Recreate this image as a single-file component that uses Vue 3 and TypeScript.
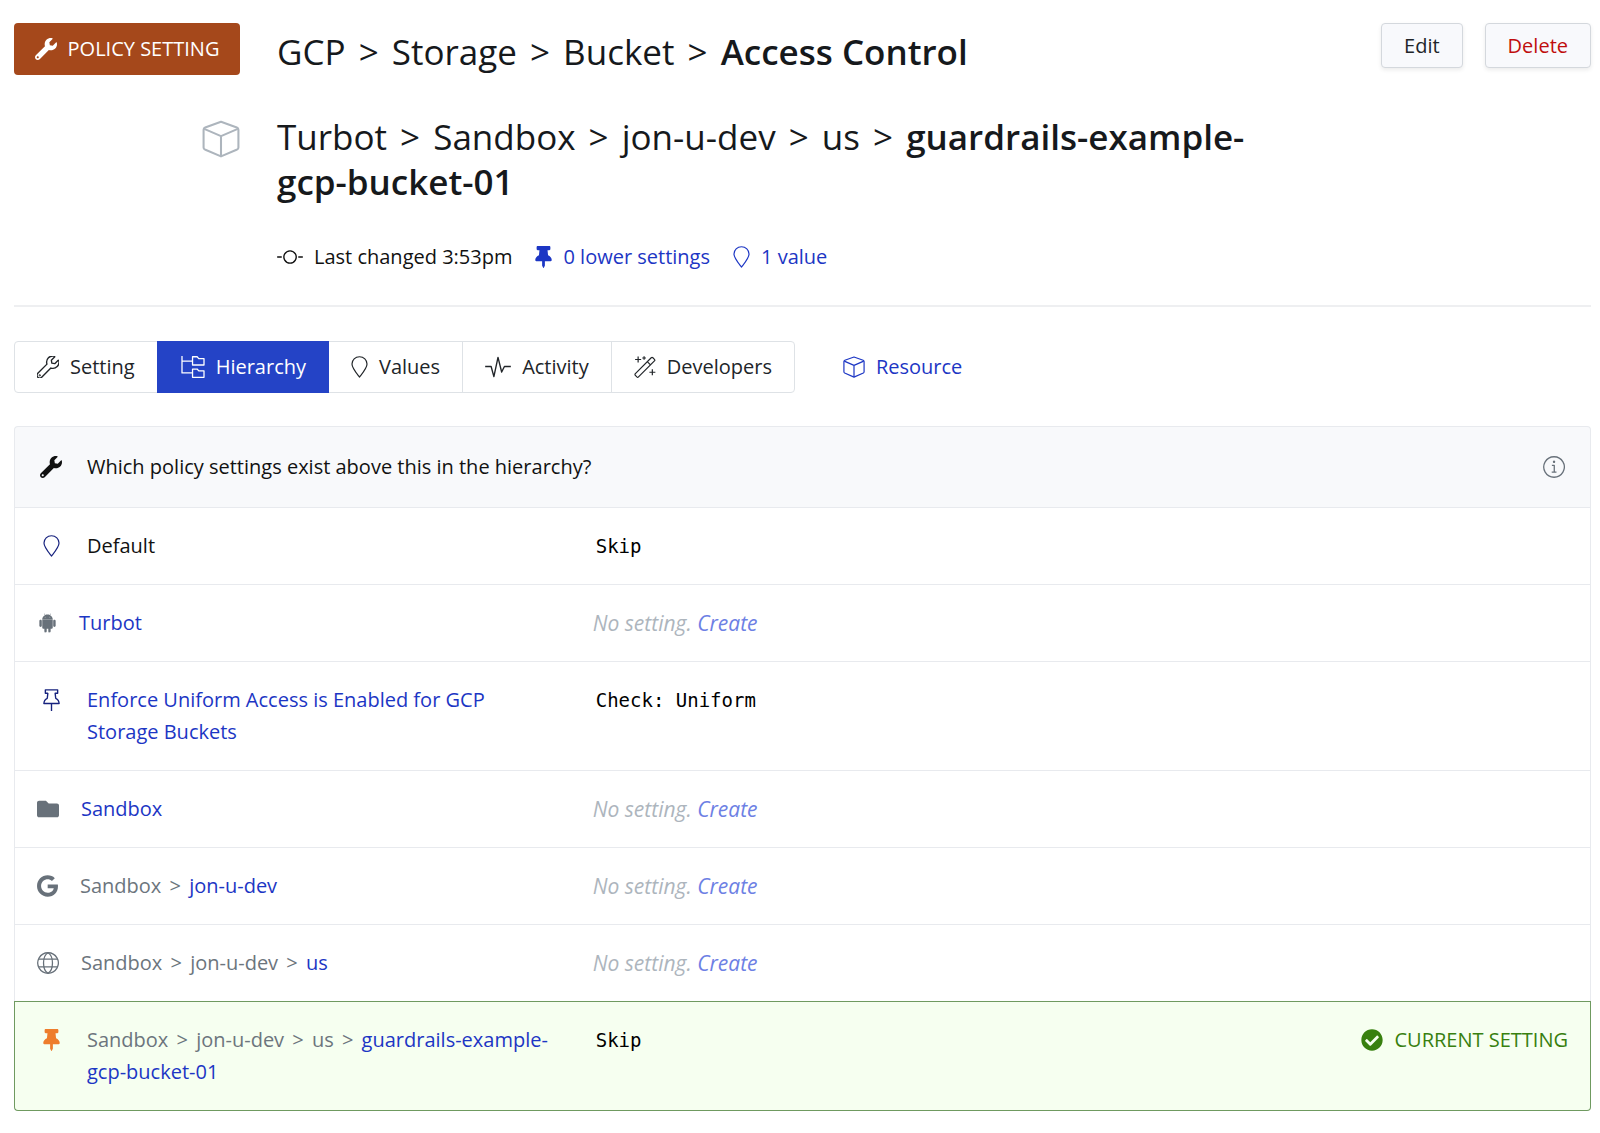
<script setup lang="ts">
import { h } from 'vue'

interface IconDef {
  box: [number, number]
  solid?: boolean
  stroke?: number
  paths: string[]
}

const wrench =
  'M507.73 109.1c-2.24-9.03-13.54-12.09-20.12-5.51l-74.36 74.36-67.88-11.31-11.31-67.88 74.36-74.36c6.62-6.62 3.43-17.9-5.66-20.16-47.38-11.74-99.55.91-136.58 37.93-39.64 39.64-50.55 97.1-34.05 147.2L18.74 402.76c-24.99 24.99-24.99 65.51 0 90.5 24.99 24.99 65.51 24.99 90.5 0l213.21-213.21c50.12 16.71 107.47 5.68 147.37-34.22 37.07-37.07 49.7-89.32 37.91-136.73z'
const wrenchHole =
  'M64 472c-13.25 0-24-10.75-24-24 0-13.26 10.75-24 24-24s24 10.74 24 24c0 13.25-10.75 24-24 24z'

const icons: Record<string, IconDef> = {
  wrench: { box: [512, 512], solid: true, paths: [wrench + wrenchHole] },
  wrenchLine: { box: [512, 512], stroke: 32, paths: [wrench, 'M64 438a10 10 0 1 0 .1 0z'] },
  cube: {
    box: [24, 24],
    stroke: 1.3,
    paths: ['M12 1.1 22 4.7q1 .4 1 1.4v11.2q0 .9-.8 1.3L12 23 1.8 18.6Q1 18.2 1 17.3V6.1q0-1 1-1.4z', 'M1.4 5.6 12 10.2l10.6-4.6M12 10.2V23']
  },
  commit: { box: [28, 24], stroke: 1.5, paths: ['M14 5.3a6.7 6.7 0 1 0 .1 0z', 'M0 12h5M23 12h5'] },
  pin: {
    box: [384, 512],
    solid: true,
    paths: [
      'M298.028 214.267L285.793 96H328c13.255 0 24-10.745 24-24V24c0-13.255-10.745-24-24-24H56C42.745 0 32 10.745 32 24v48c0 13.255 10.745 24 24 24h42.207L85.972 214.267C37.465 236.82 0 277.261 0 328c0 13.255 10.745 24 24 24h136v104.007c0 1.242.289 2.467.845 3.578l24 48c2.941 5.882 11.364 5.893 14.311 0l24-48a8.008 8.008 0 0 0 .845-3.578V352h136c13.255 0 24-10.745 24-24-.001-51.183-37.983-91.42-85.973-113.733z'
    ]
  },
  pinLine: {
    box: [18, 24],
    stroke: 1.5,
    paths: ['M2.3.9h13.4v3.8H13l.6 5.4c2.2 1 3.6 3 3.7 5.7H.7c.1-2.7 1.5-4.7 3.7-5.7L5 4.7H2.3z', 'M9 15.8V24']
  },
  balloon: {
    box: [18, 24],
    stroke: 1.3,
    paths: ['M9 .8C4.4.8.8 4.3.8 8.8c0 4.2 3 7.6 8.2 14.2 5.2-6.6 8.2-10 8.2-14.2C17.2 4.3 13.6.8 9 .8z']
  },
  tree: {
    box: [26, 24],
    stroke: 1.4,
    paths: ['M1 0v18.5h11.5M1 5.5h11.5', 'M12.5 .8h5l1.8 2H25v7H12.5z', 'M12.5 14.2h5l1.8 2H25v7H12.5z']
  },
  pulse: { box: [28, 24], stroke: 1.5, paths: ['M0 11.5h6.5L9.5 22.5 14 1.5l4 16 3-6H28'] },
  wand: {
    box: [24, 24],
    stroke: 1.3,
    paths: [
      'M1.5 19.3 18.8 1.9q.9-.9 1.8 0l1.7 1.7q.9.9 0 1.8L4.9 22.8q-.9.9-1.8 0l-1.6-1.7q-.9-.9 0-1.8z',
      'M14.5 6.2l3.5 3.5',
      'M4.5.5v6.5M1.2 3.8h6.6M11 .2v4M9 2.2h4M20 14.5v6.5M16.8 17.7h6.5'
    ]
  },
  info: {
    box: [24, 24],
    stroke: 1.4,
    paths: ['M12 .8a11.2 11.2 0 1 0 .1 0z', 'M9.7 10.2h2.6v7.3M9.5 17.6h5.2', 'M12 5.7a.6.6 0 1 0 .1 0z']
  },
  android: {
    box: [448, 512],
    solid: true,
    paths: [
      'M89.6 204.5v115.8c0 15.4-12.1 27.7-27.5 27.7-15.3 0-30.1-12.4-30.1-27.7V204.5c0-15.1 14.8-27.5 30.1-27.5 15.1 0 27.5 12.4 27.5 27.5zm10.8 157c0 16.4 13.2 29.6 29.6 29.6h19.9l.3 61.1c0 36.9 55.2 36.6 55.2 0v-61.1h37.2v61.1c0 36.7 55.5 36.8 55.5 0v-61.1h20.2c16.2 0 29.4-13.2 29.4-29.6V182.1H100.4v179.4zm248-189.1H99.3c0-42.8 25.6-80 63.6-99.4l-19.1-35.3c-2.8-4.9 4.3-8 6.7-3.8l19.4 35.6c34.9-15.5 75-14.7 108.3 0L297.5 34c2.5-4.3 9.5-1.1 6.7 3.8L285.1 73c37.7 19.4 63.3 56.6 63.3 99.4zm-170.7-55.5c0-5.7-4.6-10.5-10.5-10.5-5.7 0-10.2 4.8-10.2 10.5s4.6 10.5 10.2 10.5c5.9 0 10.5-4.8 10.5-10.5zm113.4 0c0-5.7-4.6-10.5-10.2-10.5-5.9 0-10.5 4.8-10.5 10.5s4.6 10.5 10.5 10.5c5.6 0 10.2-4.8 10.2-10.5zm94.8 60.1c-15.1 0-27.5 12.1-27.5 27.5v115.8c0 15.4 12.4 27.7 27.5 27.7 15.4 0 30.1-12.4 30.1-27.7V204.5c0-15.4-14.8-27.5-30.1-27.5z'
    ]
  },
  folder: {
    box: [512, 512],
    solid: true,
    paths: ['M464 128H272l-64-64H48C21.49 64 0 85.49 0 112v288c0 26.51 21.49 48 48 48h416c26.51 0 48-21.49 48-48V176c0-26.51-21.49-48-48-48z']
  },
  google: {
    box: [488, 512],
    solid: true,
    paths: [
      'M488 261.8C488 403.3 391.1 504 248 504 110.8 504 0 393.2 0 256S110.8 8 248 8c66.8 0 123 24.5 166.3 64.9l-67.5 64.9C258.5 52.6 94.3 116.6 94.3 256c0 86.5 69.1 156.6 153.7 156.6 98.2 0 135-70.4 140.8-106.9H248v-85.3h236.1c2.3 12.7 3.9 24.9 3.9 41.4z'
    ]
  },
  globe: {
    box: [24, 24],
    stroke: 1.4,
    paths: ['M12 .8a11.2 11.2 0 1 0 .1 0z', 'M12 .8C5.5 4.5 5.5 19.5 12 23.2M12 .8c6.5 3.7 6.5 18.7 0 22.4', 'M2 7.8h20M2 16.2h20']
  },
  check: {
    box: [512, 512],
    solid: true,
    paths: [
      'M504 256c0 136.967-111.033 248-248 248S8 392.967 8 256 119.033 8 256 8s248 111.033 248 248zM227.314 387.314l184-184c6.248-6.248 6.248-16.379 0-22.627l-22.627-22.627c-6.248-6.249-16.379-6.249-22.628 0L216 308.118l-70.059-70.059c-6.248-6.248-16.379-6.248-22.628 0l-22.627 22.627c-6.248 6.248-6.248 16.379 0 22.627l104 104c6.249 6.249 16.379 6.249 22.628.001z'
    ]
  }
}

const Icon = (props: { name: string; size?: number }) => {
  const def = icons[props.name]
  const height = props.size ?? 22
  return h(
    'svg',
    {
      class: 'icon',
      viewBox: `0 0 ${def.box[0]} ${def.box[1]}`,
      width: Math.round((height * def.box[0]) / def.box[1]),
      height,
      fill: def.solid ? 'currentColor' : 'none',
      stroke: def.solid ? 'none' : 'currentColor',
      'stroke-width': def.stroke,
      'stroke-linejoin': 'round',
      'aria-hidden': 'true'
    },
    def.paths.map((d) => h('path', { d }))
  )
}
Icon.props = ['name', 'size']

const policyPath = ['GCP', 'Storage', 'Bucket']
const resourcePath = ['Turbot', 'Sandbox', 'jon-u-dev', 'us']
// Long resource names may only break between these pieces.
const bucketName = ['guardrails-example-', 'gcp-bucket-01']

const tabs = [
  { label: 'Setting', icon: 'wrenchLine' },
  { label: 'Hierarchy', icon: 'tree', active: true },
  { label: 'Values', icon: 'balloon' },
  { label: 'Activity', icon: 'pulse' },
  { label: 'Developers', icon: 'wand' }
]

interface Row {
  icon: string
  kind: 'policy' | 'resource'
  tone: string
  parents: string[]
  name: string
  pieces?: string[]
  plain?: boolean
  value?: string
  current?: boolean
}

const rows: Row[] = [
  { icon: 'balloon', kind: 'policy', tone: 'navy', parents: [], name: 'Default', plain: true, value: 'Skip' },
  { icon: 'android', kind: 'resource', tone: 'slate', parents: [], name: 'Turbot' },
  { icon: 'pinLine', kind: 'policy', tone: 'navy', parents: [], name: 'Enforce Uniform Access is Enabled for GCP Storage Buckets', value: 'Check: Uniform' },
  { icon: 'folder', kind: 'resource', tone: 'slate', parents: [], name: 'Sandbox' },
  { icon: 'google', kind: 'resource', tone: 'slate', parents: ['Sandbox'], name: 'jon-u-dev' },
  { icon: 'globe', kind: 'resource', tone: 'slate', parents: ['Sandbox', 'jon-u-dev'], name: 'us' },
  { icon: 'pin', kind: 'policy', tone: 'orange', parents: ['Sandbox', 'jon-u-dev', 'us'], name: bucketName.join(''), pieces: bucketName, value: 'Skip', current: true }
]
</script>

<template>
  <main class="page">
    <header class="head">
      <div class="badge"><Icon name="wrench" /><span>POLICY SETTING</span></div>
      <h1 class="title">
        <template v-for="part in policyPath" :key="part">{{ part }} <span class="sep">&gt;</span>{{ ' ' }}</template><strong>Access Control</strong>
      </h1>
      <div class="actions">
        <button type="button" class="btn">Edit</button>
        <button type="button" class="btn danger">Delete</button>
      </div>
      <div class="cube"><Icon name="cube" :size="38" /></div>
      <div class="target">
        <h2 class="title">
          <template v-for="part in resourcePath" :key="part">{{ part }} <span class="sep">&gt;</span>{{ ' ' }}</template><strong><template v-for="piece in bucketName" :key="piece"><span class="piece">{{ piece }}</span><wbr /></template></strong>
        </h2>
        <div class="meta">
          <span class="meta-item"><Icon name="commit" />Last changed 3:53pm</span>
          <a href="#" class="meta-item"><Icon name="pin" />0 lower settings</a>
          <a href="#" class="meta-item"><Icon name="balloon" />1 value</a>
        </div>
      </div>
    </header>

    <nav class="nav">
      <div class="tabs">
        <a v-for="tab in tabs" :key="tab.label" href="#" class="tab" :class="{ active: tab.active }">
          <Icon :name="tab.icon" />{{ tab.label }}
        </a>
      </div>
      <a href="#" class="resource"><Icon name="cube" />Resource</a>
    </nav>

    <table class="hierarchy">
      <colgroup>
        <col class="col-name" />
        <col />
        <col class="col-status" />
      </colgroup>
      <thead>
        <tr>
          <th colspan="2" scope="colgroup">
            <div class="cell policy"><span class="mark"><Icon name="wrench" /></span><span>Which policy settings exist above this in the hierarchy?</span></div>
          </th>
          <th class="end">
            <button type="button" class="info" aria-label="About this list"><Icon name="info" /></button>
          </th>
        </tr>
      </thead>
      <tbody>
        <tr v-for="row in rows" :key="row.name" :class="{ current: row.current }">
          <td>
            <div class="cell" :class="row.kind">
              <span class="mark" :class="row.tone"><Icon :name="row.icon" /></span>
              <span class="name">
                <template v-for="parent in row.parents" :key="parent"><span class="piece">{{ parent }}</span> <span class="sep">&gt;</span>{{ ' ' }}</template>
                <span v-if="row.plain" class="plain">{{ row.name }}</span>
                <a v-else-if="row.pieces" href="#"><template v-for="piece in row.pieces" :key="piece"><span class="piece">{{ piece }}</span><wbr /></template></a>
                <a v-else href="#">{{ row.name }}</a>
              </span>
            </div>
          </td>
          <td class="value">
            <code v-if="row.value">{{ row.value }}</code>
            <em v-else>No setting. <a href="#">Create</a></em>
          </td>
          <td class="end">
            <span v-if="row.current" class="status"><Icon name="check" />CURRENT SETTING</span>
          </td>
        </tr>
      </tbody>
    </table>
  </main>
</template>

<style>
body {
  margin: 0;
  background: #fff;
}
</style>

<style scoped>
.page {
  padding: 23px 9px 21px 14px;
  color: #111;
  font-family: 'Segoe UI', 'Open Sans', 'Noto Sans', sans-serif;
  font-size: 20px;
  line-height: 32px;
}

a {
  color: #1c36c4;
  text-decoration: none;
}

.icon {
  display: block;
  flex: none;
}

.piece {
  white-space: nowrap;
}

.head {
  display: grid;
  grid-template-columns: 226px 1fr auto;
  column-gap: 37px;
  row-gap: 39px;
  align-items: start;
  padding-bottom: 32px;
  border-bottom: 2px solid #eeeff1;
}

.badge {
  display: flex;
  align-items: center;
  justify-content: center;
  gap: 11px;
  height: 52px;
  border-radius: 4px;
  background: #a5481b;
  color: #fff;
}

.title {
  margin: 0;
  color: #16191c;
  font-size: 35px;
  font-weight: 400;
  line-height: 45px;
}

h1.title {
  padding-top: 6px;
}

.title strong {
  font-weight: 600;
}

.sep {
  margin: 0 3px;
}

.title .sep {
  margin: 0 4px;
}

.actions {
  display: flex;
  gap: 22px;
}

.btn {
  height: 45px;
  padding: 0 22px;
  border: 1px solid #d4d8dd;
  border-radius: 4px;
  background: #f8f9fc;
  box-shadow: 0 2px 4px rgba(0, 0, 0, 0.08);
  color: #212529;
  font: inherit;
}

.btn.danger {
  color: #c00d0d;
}

.cube {
  display: flex;
  justify-content: flex-end;
  padding-top: 6px;
  color: #adb5bd;
}

.meta {
  display: flex;
  gap: 23px;
  padding-top: 37px;
}

.meta-item {
  display: flex;
  align-items: center;
  gap: 11px;
}

.nav {
  display: flex;
  align-items: center;
  gap: 48px;
  margin: 34px 0 33px;
}

.tabs {
  display: flex;
  border: 1px solid #dee2e6;
  border-radius: 4px;
}

.tab {
  display: flex;
  align-items: center;
  gap: 11px;
  padding: 9px 22px;
  color: #212529;
}

.tab + .tab {
  border-left: 1px solid #dee2e6;
}

.tab.active {
  margin: -1px 0;
  padding: 10px 23px;
  border-color: #2443c6;
  background: #2443c6;
  color: #fff;
}

.tab.active + .tab {
  border-left: 0;
}

.resource {
  display: flex;
  align-items: center;
  gap: 11px;
}

.hierarchy {
  width: 100%;
  border-spacing: 0;
  table-layout: fixed;
}

.col-name {
  width: 36%;
}

.col-status {
  width: 18%;
}

th,
td {
  padding: 22px;
  border: 0 solid #e8eaee;
  border-top-width: 1px;
  text-align: left;
  vertical-align: top;
  font-weight: 400;
}

th:first-child,
td:first-child {
  border-left-width: 1px;
}

th:last-child,
td:last-child {
  border-right-width: 1px;
}

th {
  padding: 24px 22px;
  background: #f8f9fb;
}

th:first-child {
  border-top-left-radius: 4px;
}

th:last-child {
  border-top-right-radius: 4px;
}

.cell {
  display: flex;
  gap: 22px;
}

.mark {
  display: flex;
  flex: none;
  align-items: center;
  justify-content: center;
  height: 32px;
  min-width: 20px;
}

.policy .mark {
  width: 28px;
}

.navy {
  color: #16227e;
}

.slate {
  color: #68717a;
}

.orange {
  color: #ee7d2c;
}

.name {
  color: #6c757d;
}

.plain {
  color: #111;
}

td.value {
  padding-left: 11px;
}

code {
  margin-left: 3px;
  color: #000;
  font-family: Consolas, 'DejaVu Sans Mono', monospace;
  font-size: 19px;
}

em {
  display: block;
  color: #adb5bd;
  font-size: 21px;
}

em a {
  color: #6d80e4;
}

.end > * {
  margin-left: auto;
}

.info {
  display: flex;
  align-items: center;
  height: 32px;
  padding: 0 3px;
  border: 0;
  background: none;
  color: #68717a;
}

.status {
  display: flex;
  align-items: center;
  justify-content: flex-end;
  gap: 11px;
  color: #38800f;
  white-space: nowrap;
}

.current td {
  border-color: #6f9a60;
  border-bottom-width: 1px;
  background: #f6fff0;
}

.current td:first-child {
  border-bottom-left-radius: 4px;
}

.current td:last-child {
  border-bottom-right-radius: 4px;
}
</style>
